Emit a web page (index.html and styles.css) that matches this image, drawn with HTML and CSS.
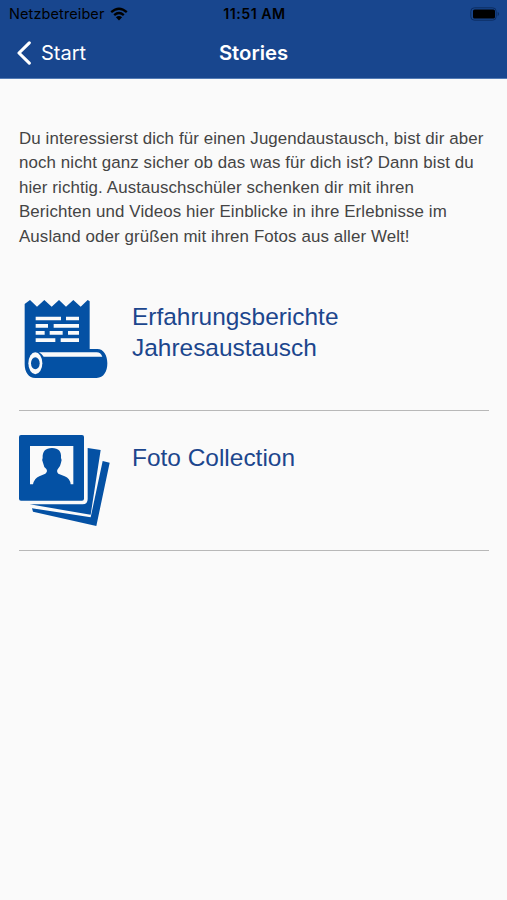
FILE: index.html
```html
<!DOCTYPE html>
<html lang="de">
<head>
<meta charset="utf-8">
<title>Stories</title>
<link rel="stylesheet" href="styles.css">
</head>
<body>
<header class="header">
  <div class="status">
    <div class="carrier"><span class="carrier-name">Netzbetreiber</span>
      <svg class="wifi" viewBox="0 0 18 14"><path d="M1.2 5.2Q9-1.7 16.8 5.2M4.2 8.1Q9 3.8 13.8 8.1" fill="none" stroke="#000" stroke-width="2.3"/><path d="M9 13.5 5.9 10.3Q9 7.8 12.1 10.3Z"/></svg>
    </div>
    <span class="time">11:51 AM</span>
    <svg class="battery" viewBox="0 0 30 14"><rect x=".8" y=".8" width="25.4" height="12.4" rx="3.6" fill="none" stroke="#0c2d62"/><rect x="3" y="2.5" width="22" height="9" rx="1.6"/><path d="M27.7 4.8Q30.5 7 27.7 9.2Z" fill="#0c2d62"/></svg>
  </div>
  <nav class="nav">
    <a class="back"><svg class="chevron" viewBox="0 0 14 24"><path d="M12.3 1.8 2 12 12.3 22.2" fill="none" stroke="#fff" stroke-width="3.1" stroke-linecap="round" stroke-linejoin="round"/></svg><span class="back-label">Start</span></a>
    <h1 class="title">Stories</h1>
  </nav>
</header>
<main class="content">
  <p class="intro">Du interessierst dich für einen Jugendaustausch, bist dir aber<br>noch nicht ganz sicher ob das was für dich ist? Dann bist du<br>hier richtig. Austauschschüler schenken dir mit ihren<br>Berichten und Videos hier Einblicke in ihre Erlebnisse im<br>Ausland oder grüßen mit ihren Fotos aus aller Welt!</p>
  <a class="row">
    <svg class="icon" viewBox="27 12 273 273">
      <path fill="#0451a4" d="M44 42 60 30 81 50 103 30 125 50 147 30 168 50 190 30 212 50 233 30 239 34V177H262C281 177 292 196 292 220S281 264 260 264H76C56 264 44 247 44 222Z"/>
      <path fill="#fafafa" d="M77 80H153V91H77ZM168 80H207V91H168ZM77 102H114V113H77ZM131 102H207V113H131ZM77 123H104V134H77ZM119 123H158V134H119ZM174 123H207V134H174ZM77 145H136V156H77ZM152 145H207V156H152ZM87 187H260Q272 187 277 200H101Q96 192 87 187Z"/>
      <ellipse cx="76" cy="220" rx="21" ry="33" fill="#fafafa"/>
      <ellipse cx="76" cy="220" rx="13" ry="18" fill="#0451a4"/>
    </svg>
    <span class="label">Erfahrungsberichte<br>Jahresaustausch</span>
  </a>
  <a class="row">
    <svg class="icon" viewBox="27 30 273 273">
      <g fill="#0451a4">
        <path d="M278 108 299 113 259 303 69 260 66 250 242 277Z"/>
        <path d="M233 69 272 75 242 269 59 238 218 238Q233 238 233 222Z"/>
        <rect x="27" y="30" width="195" height="197" rx="6"/>
      </g>
      <path fill="#fafafa" d="M60 63H190V178H182Q180 160 164 154L145 146Q138 139 144 131Q151 125 153 113Q157 105 153 99C155 80 146 69 126 69S97 80 98 99Q94 106 99 113Q101 126 109 132Q114 140 106 146L88 154Q73 160 69 178H60Z"/>
    </svg>
    <span class="label">Foto Collection</span>
  </a>
</main>
</body>
</html>
```
FILE: styles.css
```css
* { box-sizing: border-box; }
body {
  margin: 0;
  min-height: 900px;
  background: #fafafa;
  font-family: "Liberation Sans", Arial, sans-serif;
}
.header {
  height: 79px;
  background: #18468e;
  border-bottom: 1px solid #537bb4;
  font-family: Inter, sans-serif;
}
.status {
  height: 27px;
  padding: 0 7px 0 9px;
  display: grid;
  grid-template-columns: 1fr auto 1fr;
  align-items: center;
  font-size: 14.5px;
  line-height: 27px;
  white-space: nowrap;
}
.carrier { display: flex; align-items: center; gap: 6px; }
.carrier-name { letter-spacing: 0.1px; }
.wifi { width: 18px; height: 14px; }
.time { font-weight: 600; font-size: 14.2px; letter-spacing: 0.5px; }
.battery { width: 30px; height: 14px; justify-self: end; }
.nav {
  height: 51px;
  padding: 0 17px;
  display: grid;
  grid-template-columns: 1fr auto 1fr;
  align-items: center;
  color: #fff;
}
.back { display: flex; align-items: center; gap: 10px; font-size: 20px; }
.chevron { width: 14px; height: 24px; }
.title { margin: 0; font-size: 20.3px; font-weight: 600; }
.content { padding: 48px 18px 0 19px; }
.intro {
  margin: 0 0 45px;
  color: #444;
  font-size: 16.9px;
  letter-spacing: 0.1px;
  line-height: 24.4px;
  white-space: nowrap;
}
.row {
  display: flex;
  gap: 22px;
  height: 117px;
  margin-bottom: 24px;
  border-bottom: 1px solid #b8b8b8;
}
.row + .row { height: 116px; }
.icon { width: 91px; height: 91px; flex: none; }
.label {
  padding-top: 8px;
  color: #1c468d;
  font-size: 24.45px;
  line-height: 30.5px;
}
```
